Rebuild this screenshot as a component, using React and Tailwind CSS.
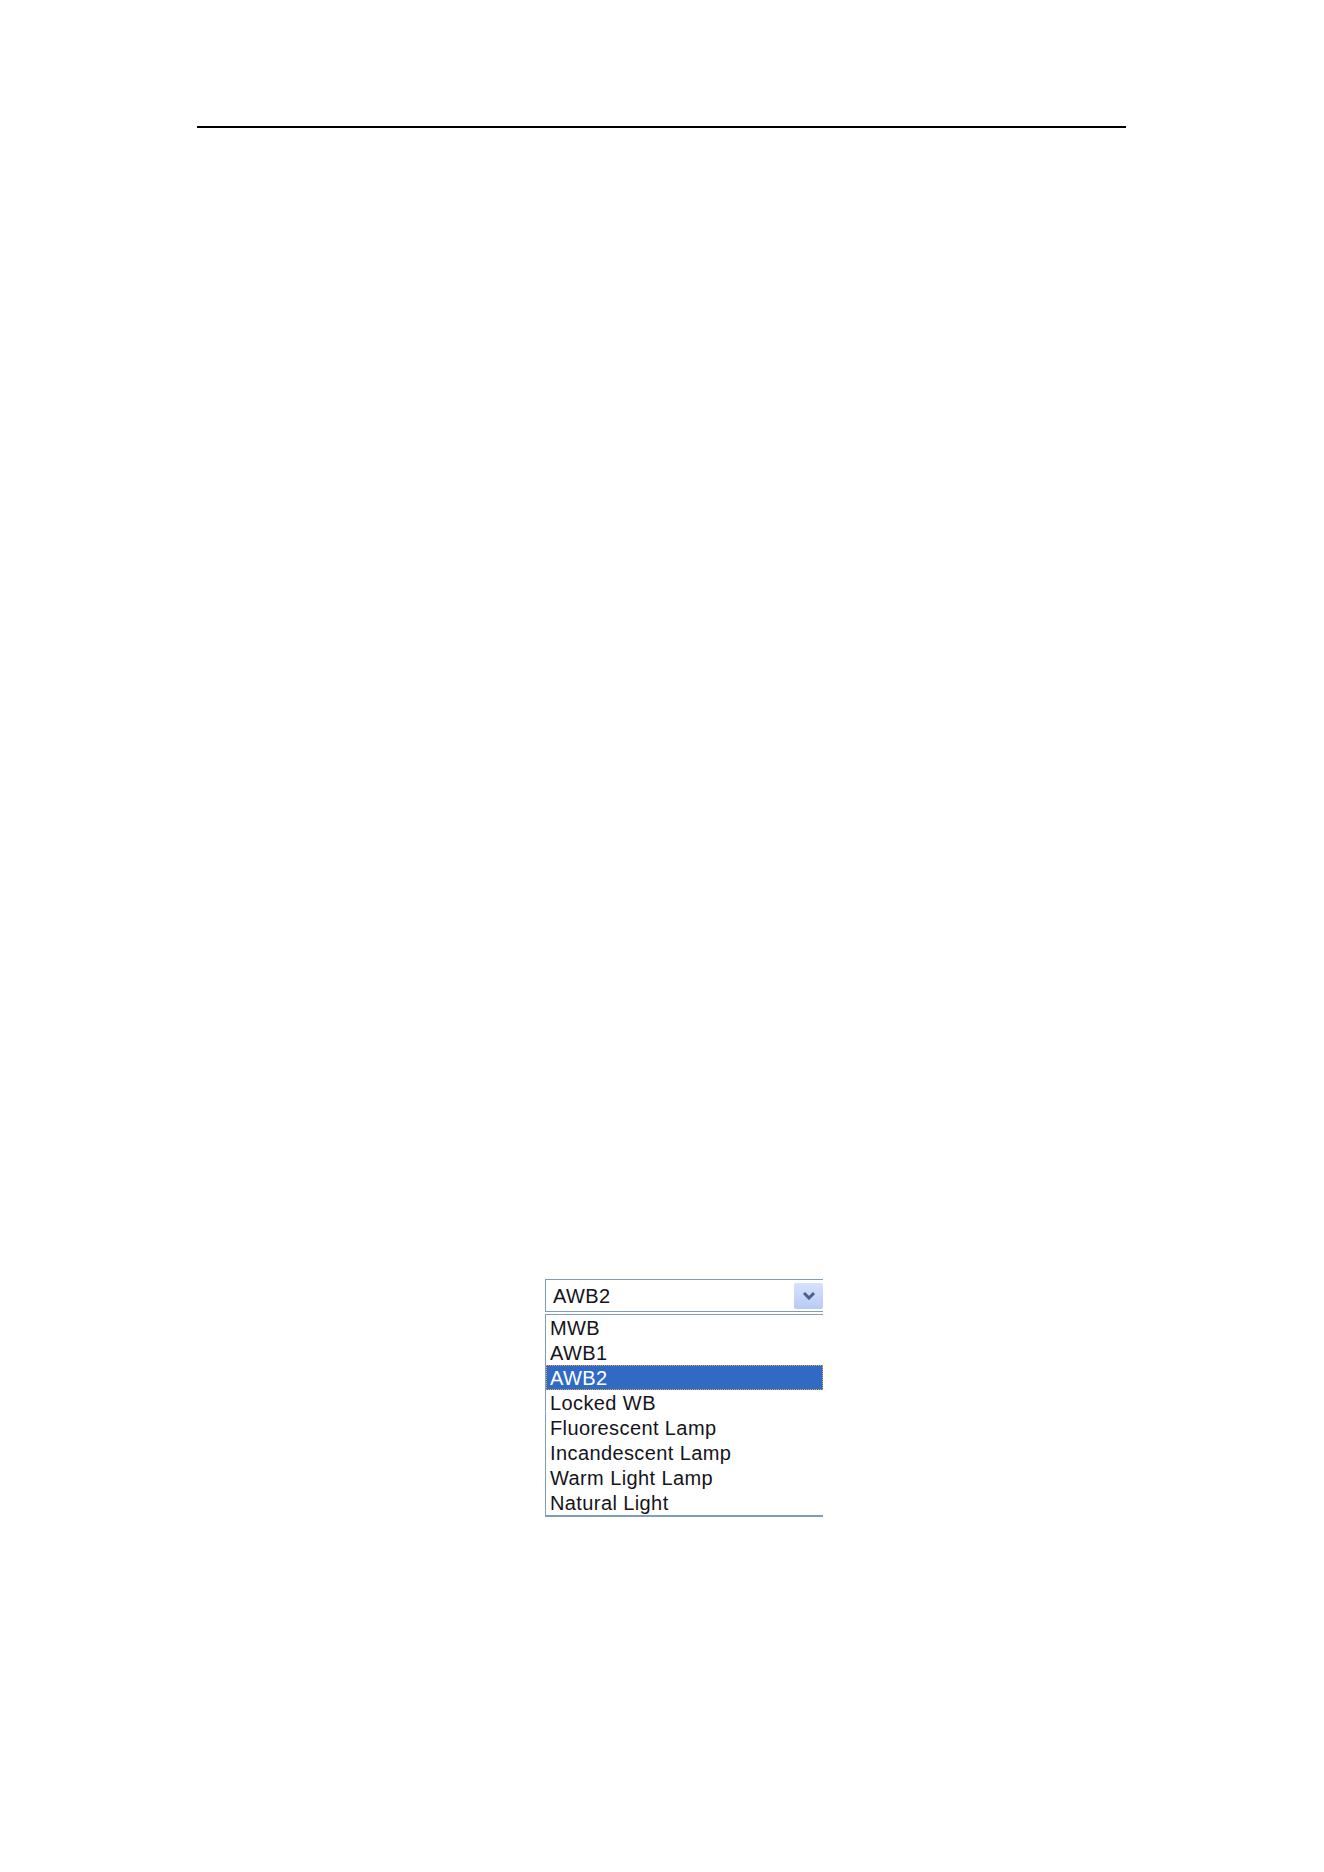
import React from "react";

const options = [
  "MWB",
  "AWB1",
  "AWB2",
  "Locked WB",
  "Fluorescent Lamp",
  "Incandescent Lamp",
  "Warm Light Lamp",
  "Natural Light",
];

const WhiteBalanceSelect = ({ value }) => {
  return (
    <div className="ml-[545px] w-[278px]">
      {/* closed select */}
      <div className="flex h-[33px] items-center justify-between border border-r-0 border-[#7f9db9] bg-white pl-[7px] pr-0">
        <span className="text-[20px] leading-none tracking-[0.4px] text-[#141420]">
          {value}
        </span>
        <div className="flex h-[26px] w-[29px] items-center justify-center rounded-[2px] bg-gradient-to-b from-[#d6e2fc] to-[#b9cbf5]">
          <svg width="14" height="9" viewBox="0 0 14 9">
            <path
              d="M2 2 L7 7 L12 2"
              fill="none"
              stroke="#4d6185"
              strokeWidth="3"
            />
          </svg>
        </div>
      </div>

      {/* open list */}
      <div className="mt-[2px] border-t border-l border-b-2 border-[#7f9db9] bg-white">
        {options.map((opt) => (
          <div
            key={opt}
            className={
              opt === value
                ? "flex h-[25px] items-center border border-dotted border-[#e8a33a] bg-[#316ac5] pl-[3px] text-[20px] leading-none tracking-[0.4px] text-white"
                : "flex h-[25px] items-center pl-[4px] text-[20px] leading-none tracking-[0.4px] text-[#141420]"
            }
          >
            {opt}
          </div>
        ))}
      </div>
    </div>
  );
};

export default function App() {
  return (
    <div className="h-[1872px] w-[1324px] bg-white pt-[126px] font-['Liberation_Sans',Arial,sans-serif]">
      <div className="ml-[197px] h-[2px] w-[929px] bg-black" />
      <div className="mt-[1151px]">
        <WhiteBalanceSelect value="AWB2" />
      </div>
    </div>
  );
}
